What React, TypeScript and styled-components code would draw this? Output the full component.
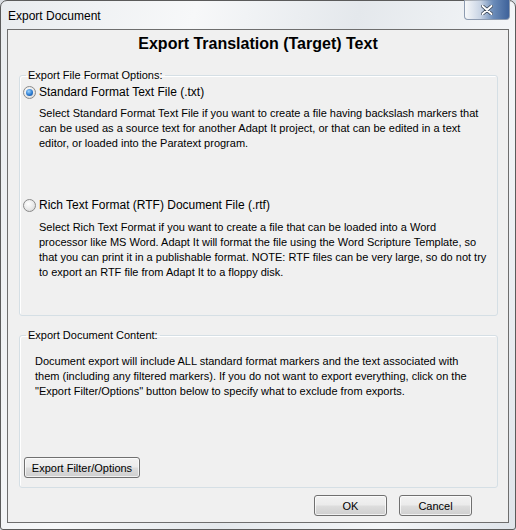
import React, { useState } from 'react';
import styled, { createGlobalStyle } from 'styled-components';

const GlobalStyle = createGlobalStyle`
  html, body {
    margin: 0;
    padding: 0;
    background: #d9dde2;
  }
  * {
    box-sizing: border-box;
  }
`;

const Window = styled.div`
  width: 516px;
  height: 530px;
  border: 1px solid #5b5b5b;
  border-radius: 7px 7px 3px 3px;
  padding: 0 6px 6px 6px;
  background: linear-gradient(105deg, #e9ecef 0%, #f7f8f9 30%, #e4e8ec 55%, #f4f6f8 80%, #dfe4ea 100%);
  display: flex;
  flex-direction: column;
  font-family: "Liberation Sans", Arial, sans-serif;
`;

const TitleBar = styled.div`
  height: 28px;
  display: flex;
  justify-content: space-between;
  align-items: flex-start;
`;

const TitleText = styled.div`
  padding: 8px 0 0 1px;
  font-size: 12px;
  color: #000;
`;

const CloseButton = styled.div`
  width: 46px;
  height: 20px;
  margin-top: -1px;
  margin-right: -1px;
  border: 1px solid #8d9bb0;
  border-top: none;
  border-radius: 0 0 4px 4px;
  background: linear-gradient(90deg, rgba(255,255,255,0.5) 0%, rgba(190,204,224,0.8) 35%, #6a8bb8 65%, #3e629a 100%);
  display: flex;
  align-items: center;
  justify-content: center;
`;

const Client = styled.div`
  flex: 1;
  border: 1px solid #6e6e6e;
  background: #f0f0f0;
  display: flex;
  flex-direction: column;
  font-size: 11px;
  color: #000;
`;

const Heading = styled.div`
  margin-top: 4px;
  line-height: 20px;
  text-align: center;
  font-size: 16px;
  font-weight: bold;
`;

const Group = styled.fieldset<{ $top: number; $bottom: number }>`
  margin: ${({ $top }) => $top}px 10px 0 11px;
  padding: 0 0 ${({ $bottom }) => $bottom}px 0;
  border: 1px solid #d5dfe5;
  border-radius: 3px;
  box-shadow: inset 1px 1px 0 #fff;
  min-width: 0;
`;

const Legend = styled.legend`
  margin-left: 6px;
  padding: 0 2px;
  line-height: 14px;
  font-size: 11px;
`;

const RadioRow = styled.label<{ $top: number }>`
  display: flex;
  align-items: center;
  height: 13px;
  margin: ${({ $top }) => $top}px 0 0 3px;
  gap: 3px;
  cursor: default;
`;

const RadioCircle = styled.span<{ $checked: boolean }>`
  width: 13px;
  height: 13px;
  border-radius: 50%;
  border: 1px solid #8a8a8a;
  background: radial-gradient(circle at 40% 35%, #ffffff 0%, #e6e6e6 60%, #cfcfcf 100%);
  display: flex;
  align-items: center;
  justify-content: center;

  &::after {
    content: '';
    display: ${({ $checked }) => ($checked ? 'block' : 'none')};
    width: 7px;
    height: 7px;
    border-radius: 50%;
    background: radial-gradient(circle at 40% 35%, #9fd5ff 0%, #2b7bd1 55%, #0d3f86 100%);
  }
`;

const RadioLabel = styled.span`
  font-size: 12px;
  line-height: 13px;
`;

const Description = styled.p<{ $top: number; $left: number }>`
  margin: ${({ $top }) => $top}px 0 0 ${({ $left }) => $left}px;
  line-height: 15px;
  white-space: nowrap;
`;

const Button = styled.button<{ $width: number }>`
  width: ${({ $width }) => $width}px;
  height: 21px;
  padding: 0;
  border: 1px solid #707070;
  border-radius: 3px;
  background: linear-gradient(#f2f2f2 0%, #ebebeb 48%, #dddddd 52%, #cfcfcf 100%);
  box-shadow: inset 0 0 0 1px rgba(255,255,255,0.7);
  font-family: "Liberation Sans", Arial, sans-serif;
  font-size: 11px;
  color: #000;
`;

const GroupButton = styled(Button)`
  margin: 58px 0 0 4px;
`;

const Footer = styled.div`
  display: flex;
  justify-content: flex-end;
  gap: 12px;
  margin: 7px 36px 0 0;
`;

const CloseGlyph = () => (
  <svg width="12" height="10" viewBox="0 0 12 10">
    <path d="M1.5 1 L10.5 9 M10.5 1 L1.5 9" stroke="#2e3a4a" strokeWidth="3.4" strokeLinecap="round" />
    <path d="M1.5 1 L10.5 9 M10.5 1 L1.5 9" stroke="#ffffff" strokeWidth="2" strokeLinecap="round" />
  </svg>
);

const App = () => {
  const [format, setFormat] = useState<'txt' | 'rtf'>('txt');

  return (
    <>
      <GlobalStyle />
      <Window>
        <TitleBar>
          <TitleText>Export Document</TitleText>
          <CloseButton>
            <CloseGlyph />
          </CloseButton>
        </TitleBar>
        <Client>
          <Heading>Export Translation (Target) Text</Heading>

          <Group $top={14} $bottom={35}>
            <Legend>Export File Format Options:</Legend>
            <RadioRow $top={4} onClick={() => setFormat('txt')}>
              <RadioCircle $checked={format === 'txt'} />
              <RadioLabel>Standard Format Text File (.txt)</RadioLabel>
            </RadioRow>
            <Description $top={7} $left={19}>
              Select Standard Format Text File if you want to create a file having backslash markers that
              <br />
              can be used as a source text for another Adapt It project, or that can be edited in a text
              <br />
              editor, or loaded into the Paratext program.
            </Description>
            <RadioRow $top={48} onClick={() => setFormat('rtf')}>
              <RadioCircle $checked={format === 'rtf'} />
              <RadioLabel>Rich Text Format (RTF) Document File (.rtf)</RadioLabel>
            </RadioRow>
            <Description $top={8} $left={19}>
              Select Rich Text Format if you want to create a file that can be loaded into a Word
              <br />
              processor like MS Word. Adapt It will format the file using the Word Scripture Template, so
              <br />
              that you can print it in a publishable format. NOTE: RTF files can be very large, so do not try
              <br />
              to export an RTF file from Adapt It to a floppy disk.
            </Description>
          </Group>

          <Group $top={12} $bottom={9}>
            <Legend>Export Document Content:</Legend>
            <Description $top={12} $left={15}>
              Document export will include ALL standard format markers and the text associated with
              <br />
              them (including any filtered markers). If you do not want to export everything, click on the
              <br />
              "Export Filter/Options" button below to specify what to exclude from exports.
            </Description>
            <GroupButton $width={116}>Export Filter/Options</GroupButton>
          </Group>

          <Footer>
            <Button $width={73}>OK</Button>
            <Button $width={73}>Cancel</Button>
          </Footer>
        </Client>
      </Window>
    </>
  );
};

export default App;
